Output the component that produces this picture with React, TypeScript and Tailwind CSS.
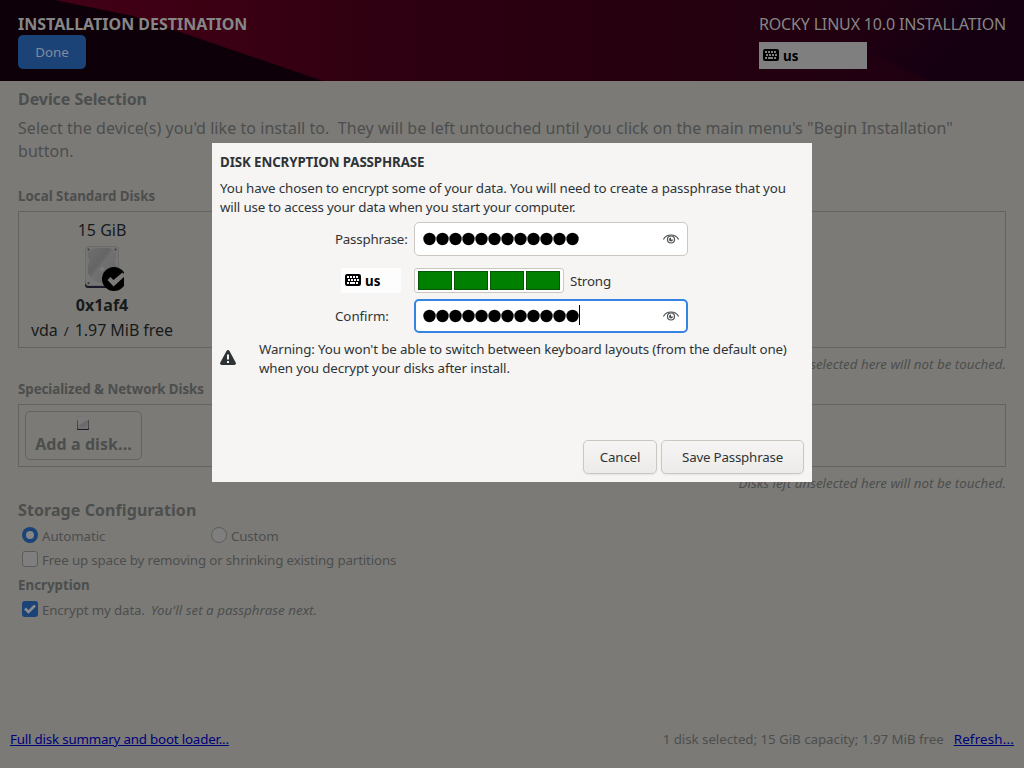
import React from "react";

function Keyboard({ paper }: { paper: string }) {
  return (
    <svg width="16" height="12" viewBox="0 0 16 12" className="shrink-0">
      <rect width="16" height="12" rx="2.2" fill="#000" />
      <path
        d="M2 2h2v2H2zM5 2h2v2H5zM8 2h2v2H8zM11 2h2v2H11zM3 5h2v2H3zM6 5h2v2H6zM9 5h2v2H9zM12 5h2v2H12zM2 8h2v2H2zM5 8h5v2H5zM11 8h2v2H11z"
        fill={paper}
      />
    </svg>
  );
}

function Eye() {
  return (
    <svg width="16" height="10" viewBox="0 0 16 10" fill="none" stroke="#4c5153">
      <path d="M.4 5.400C2 2.600 5 1 8 1s6 1.600 7.600 4.400" strokeWidth="1.200" />
      <circle cx="8" cy="5.500" r="3.500" strokeWidth="1.200" />
      <path d="M8 3.500a2 2 0 1 0 2 2H8z" fill="#4c5153" stroke="none" />
    </svg>
  );
}

function Disk() {
  return (
    <svg width="44" height="48" viewBox="0 0 44 48">
      <defs>
        <linearGradient id="plate" x1="0" y1="0" x2="1" y2="1">
          <stop offset="0" stopColor="#6f6f6f" />
          <stop offset=".4" stopColor="#666565" />
          <stop offset=".5" stopColor="#727171" />
          <stop offset="1" stopColor="#666565" />
        </linearGradient>
      </defs>
      <rect x="5" y="14" width="34" height="30" rx="3" fill="#1c1a28" />
      <rect x="5.500" y="2.500" width="33" height="39" rx="3" fill="#777676" stroke="#6c6b6b" />
      <path d="M8 9q3-5 9-5h10q6 0 9 5v5q-3 3 0 6v6q-4 11-14 13Q12 38 8 29v-9q3-3 0-6z" fill="url(#plate)" />
      <circle cx="22" cy="25" r="2" fill="#7d7c7c" />
      <circle cx="8.500" cy="5.500" r="1" fill="#353535" />
      <circle cx="35.500" cy="5.500" r="1" fill="#353535" />
      <circle cx="8.500" cy="39" r="1" fill="#353535" />
      <circle cx="34" cy="35" r="12" fill="#000" />
      <path d="M27.500 36l3-3 3 3L42.500 28.500l3 3L33.500 42.500z" fill="#7b7a77" />
    </svg>
  );
}

function SmallDisk() {
  return (
    <svg width="12" height="15" viewBox="0 0 12 15">
      <rect y="4" width="12" height="10" rx="1" fill="#1d1b28" />
      <rect x=".500" y="0" width="11" height="13" rx="1" fill="#747373" />
      <circle cx="6" cy="6.500" r="5" fill="#6c6b6b" />
      <path d="M1 .500h10v3L2 9H1z" fill="#7c7b7b" />
    </svg>
  );
}

function Tick() {
  return (
    <span className="flex size-4 items-center justify-center rounded-[3px] bg-[#1b4378]">
      <svg width="12" height="10" viewBox="0 0 12 10" fill="none" stroke="#8c8c8c" strokeWidth="2.600">
        <path d="M1 4.500l3.500 3.500L11 1.500" />
      </svg>
    </span>
  );
}

function Entry({ focused = false }: { focused?: boolean }) {
  return (
    <div
      className={
        focused
          ? "flex h-[34px] w-[274px] items-center rounded-[5px] border-2 border-[#3584e4] bg-white pl-[7px] pr-[7px]"
          : "flex h-[34px] w-[274px] items-center rounded-[5px] border border-[#cdc7c2] bg-white px-2"
      }
    >
      <svg width="156" height="14" viewBox="0 0 156 14">
        {Array.from({ length: 12 }, (_, i) => (
          <circle key={i} cx={6.5 + i * 13} cy="7" r="6.2" />
        ))}
      </svg>
      {focused && <span className="-mt-[2px] h-5 w-px bg-black" />}
      <span className="ml-auto">
        <Eye />
      </span>
    </div>
  );
}

function Dialog() {
  return (
    <div className="absolute left-[212px] top-[143px] flex h-[339px] w-[600px] flex-col bg-[#f6f5f4] px-2 text-[#2e3436]">
      <h2 className="h-[36px] text-[13.333px] font-bold leading-[38px] tracking-[-0.11px]">DISK ENCRYPTION PASSPHRASE</h2>
      <p className="h-[43px] whitespace-nowrap leading-[19px] tracking-[-0.147px]">
        You have chosen to encrypt some of your data. You will need to create a passphrase that you
        <br />
        <span className="tracking-[-0.17px]">will use to access your data when you start your computer.</span>
      </p>
      <div className="flex h-[34px] items-center pl-[115px]">
        <span className="w-[79px] pt-[2px] tracking-[-0.22px]">Passphrase:</span>
        <Entry />
      </div>
      <div className="mt-3 flex h-[25px] items-center pl-[121px]">
        <div className="mr-[13px] flex h-[25px] w-[60px] items-center gap-1 bg-[#fdfdfd] pl-1 pt-[2px] font-bold text-black">
          <span className="-mt-[4px]">
            <Keyboard paper="#fdfdfd" />
          </span>
          us
        </div>
        <div className="flex h-[25px] w-[150px] items-center gap-[2px] rounded-[3px] border border-[#cdc7c2] bg-white px-[3px]">
          {[1, 2, 3, 4].map((n) => (
            <span key={n} className="h-[19px] w-[34px] border border-[#0a540a] bg-[#008000]" />
          ))}
        </div>
        <span className="ml-[6px] pt-[2px] tracking-[-0.15px]">Strong</span>
      </div>
      <div className="mt-[6px] flex h-[34px] items-center pl-[115px]">
        <span className="w-[79px] pt-[2px] tracking-[-0.05px]">Confirm:</span>
        <Entry focused />
      </div>
      <div className="mt-[7px] flex h-[38px] items-center">
        <svg width="16" height="16" viewBox="0 0 16 16" className="-mt-[2px] mr-[23px] shrink-0">
          <path d="M8 0q1 0 1.500.9l6.200 11.500q.8 2.600-1.400 2.600H1.700Q-.500 15 .3 12.400L6.500.9Q7 0 8 0z" fill="#2e3436" />
          <path d="M7 4.500h2v5H7zM7 11h2v2H7z" fill="#f6f5f4" />
        </svg>
        <p className="whitespace-nowrap leading-[19px] tracking-[-0.137px]">
          Warning: You won't be able to switch between keyboard layouts (from the default one)
          <br />
          when you decrypt your disks after install.
        </p>
      </div>
      <div className="mb-2 mt-auto flex justify-end gap-1">
        <button className="h-[34px] w-[74px] rounded-[5px] border border-[#cdc7c2] bg-linear-to-b from-[#f6f5f4] to-[#edebe9] pt-[2px] tracking-[-0.2px] shadow-[0_1px_2px_rgba(0,0,0,0.07)]">
          Cancel
        </button>
        <button className="h-[34px] w-[143px] rounded-[5px] border border-[#cdc7c2] bg-linear-to-b from-[#f6f5f4] to-[#edebe9] pt-[2px] tracking-[-0.2px] shadow-[0_1px_2px_rgba(0,0,0,0.07)]">
          Save Passphrase
        </button>
      </div>
    </div>
  );
}

function Header() {
  return (
    <header className="relative h-[81px] text-[#868686]">
      <svg className="absolute inset-0" width="1024" height="81" viewBox="0 0 1024 81">
        <defs>
          <linearGradient id="sky" x1="0" y1="0" x2="1024" y2="0" gradientUnits="userSpaceOnUse">
            <stop offset=".05" stopColor="#420016" />
            <stop offset=".22" stopColor="#3b0013" />
            <stop offset=".36" stopColor="#2f0011" />
            <stop offset=".6" stopColor="#27000f" />
            <stop offset="1" stopColor="#1c0011" />
          </linearGradient>
          <linearGradient id="dusk" x1="860" y1="20" x2="920" y2="81" gradientUnits="userSpaceOnUse">
            <stop offset="0" stopColor="#180013" stopOpacity="0" />
            <stop offset="1" stopColor="#150011" />
          </linearGradient>
        </defs>
        <rect width="1024" height="81" fill="url(#sky)" />
        <path d="M760 0h264v81H930Q860 50 760 0z" fill="url(#dusk)" />
        <path d="M0 0h55l78 16 47 16L323 81H0z" fill="#0e0008" />
      </svg>
      <div className="relative flex justify-between px-[18px]">
        <div>
          <h1 className="pt-[14px] text-base font-bold leading-5">INSTALLATION DESTINATION</h1>
          <button className="mt-[1px] block h-[34px] w-[68px] rounded-[5px] bg-[#1b4378] pt-[2px] text-[#808c9b]">
            Done
          </button>
        </div>
        <div className="w-[247px]">
          <div className="whitespace-nowrap pt-[14px] text-base leading-5 tracking-[-0.17px]">
            ROCKY LINUX 10.0 INSTALLATION
          </div>
          <div className="mt-2 flex h-[27px] w-[108px] items-center gap-1 bg-[#7f7f7f] pl-1 pt-[2px] font-bold text-black">
            <span className="-mt-[4px]">
              <Keyboard paper="#7f7f7f" />
            </span>
            us
          </div>
        </div>
      </div>
    </header>
  );
}

export default function App() {
  return (
    <div className="relative flex h-[768px] w-[1024px] flex-col overflow-hidden bg-[#7b7a77] font-['Noto_Sans',sans-serif] text-[13.333px] text-[#4c4e4d]">
      <Header />
      <main className="px-[18px]">
        <h2 className="text-base font-bold leading-[36px] tracking-[-0.06px]">Device Selection</h2>
        <div className="h-16 whitespace-pre text-base leading-[23px] tracking-[0.054px]">
          <p>
            {"Select the device(s) you'd like to install to.  They will be left untouched until you click on the main menu's \"Begin Installation\""}
          </p>
          <p className="w-fit">button.</p>
        </div>
        <h3 className="font-bold leading-[30px]">Local Standard Disks</h3>
        <section className="h-[137px] border border-[#646361] text-base text-[#171a1b]">
          <div className="ml-[12px] flex w-[142px] flex-col items-center pt-[7px]">
            <span className="leading-[22px]">15 GiB</span>
            <span className="mt-[3px]">
              <Disk />
            </span>
            <span className="mt-[2px] font-bold leading-[22px]">0x1af4</span>
            <span className="mt-[3px] flex items-baseline whitespace-pre leading-[22px] tracking-[-0.05px]">
              vda<span className="mx-[6px] text-[13.333px]">/</span>1.97 MiB free
            </span>
          </div>
        </section>
        <p className="text-right italic leading-[32px]">Disks left unselected here will not be touched.</p>
        <h3 className="mb-[6px] font-bold leading-[18px] tracking-[-0.07px]">Specialized &amp; Network Disks</h3>
        <section className="h-[63px] border border-[#646361] p-[6px]">
          <button className="flex h-[49px] w-[117px] flex-col items-center rounded-[5px] border border-[#646361] pt-[4px] text-base font-bold leading-[22px]">
            <span className="mr-[2px]">
              <SmallDisk />
            </span>
            <span className="mt-[2px] tracking-[0.08px]">Add a disk...</span>
          </button>
        </section>
        <p className="text-right italic leading-[32px]">Disks left unselected here will not be touched.</p>
        <h2 className="mb-[3px] text-base font-bold leading-[22px] tracking-[0.08px]">Storage Configuration</h2>
        <div className="flex h-6 items-center pl-1 pt-[2px]">
          <span className="-mt-[4px] mr-1 flex size-4 items-center justify-center rounded-full bg-[#1b4378]">
            <span className="size-2 rounded-full bg-[#858585]" />
          </span>
          <span className="w-[169px] tracking-[-0.1px]">Automatic</span>
          <span className="-mt-[4px] mr-1 size-4 rounded-full border border-[#5e5d5b] bg-[#7f7f7f]" />
          <span className="tracking-[-0.15px]">Custom</span>
        </div>
        <div className="flex h-6 items-center pl-1 pt-[2px]">
          <span className="-mt-[4px] mr-1 size-4 rounded-[3px] border border-[#5e5d5b] bg-[#7f7f7f]" />
          <span className="tracking-[-0.155px]">Free up space by removing or shrinking existing partitions</span>
        </div>
        <h3 className="font-bold leading-[26px]">Encryption</h3>
        <div className="flex h-6 items-center pl-1 pt-[2px]">
          <span className="-mt-[4px] mr-1">
            <Tick />
          </span>
          <span className="tracking-[-0.14px]">Encrypt my data.</span>
          <span className="ml-[6px] italic tracking-[0.03px]">You'll set a passphrase next.</span>
        </div>
      </main>
      <footer className="mb-[19px] mt-auto flex px-[10px] leading-5">
        <a className="tracking-[-0.19px] text-[#00007b] underline">Full disk summary and boot loader...</a>
        <span className="ml-auto tracking-[-0.04px]">1 disk selected; 15 GiB capacity; 1.97 MiB free</span>
        <a className="ml-[10px] tracking-[0.18px] text-[#00007b] underline">Refresh...</a>
      </footer>
      <Dialog />
    </div>
  );
}
